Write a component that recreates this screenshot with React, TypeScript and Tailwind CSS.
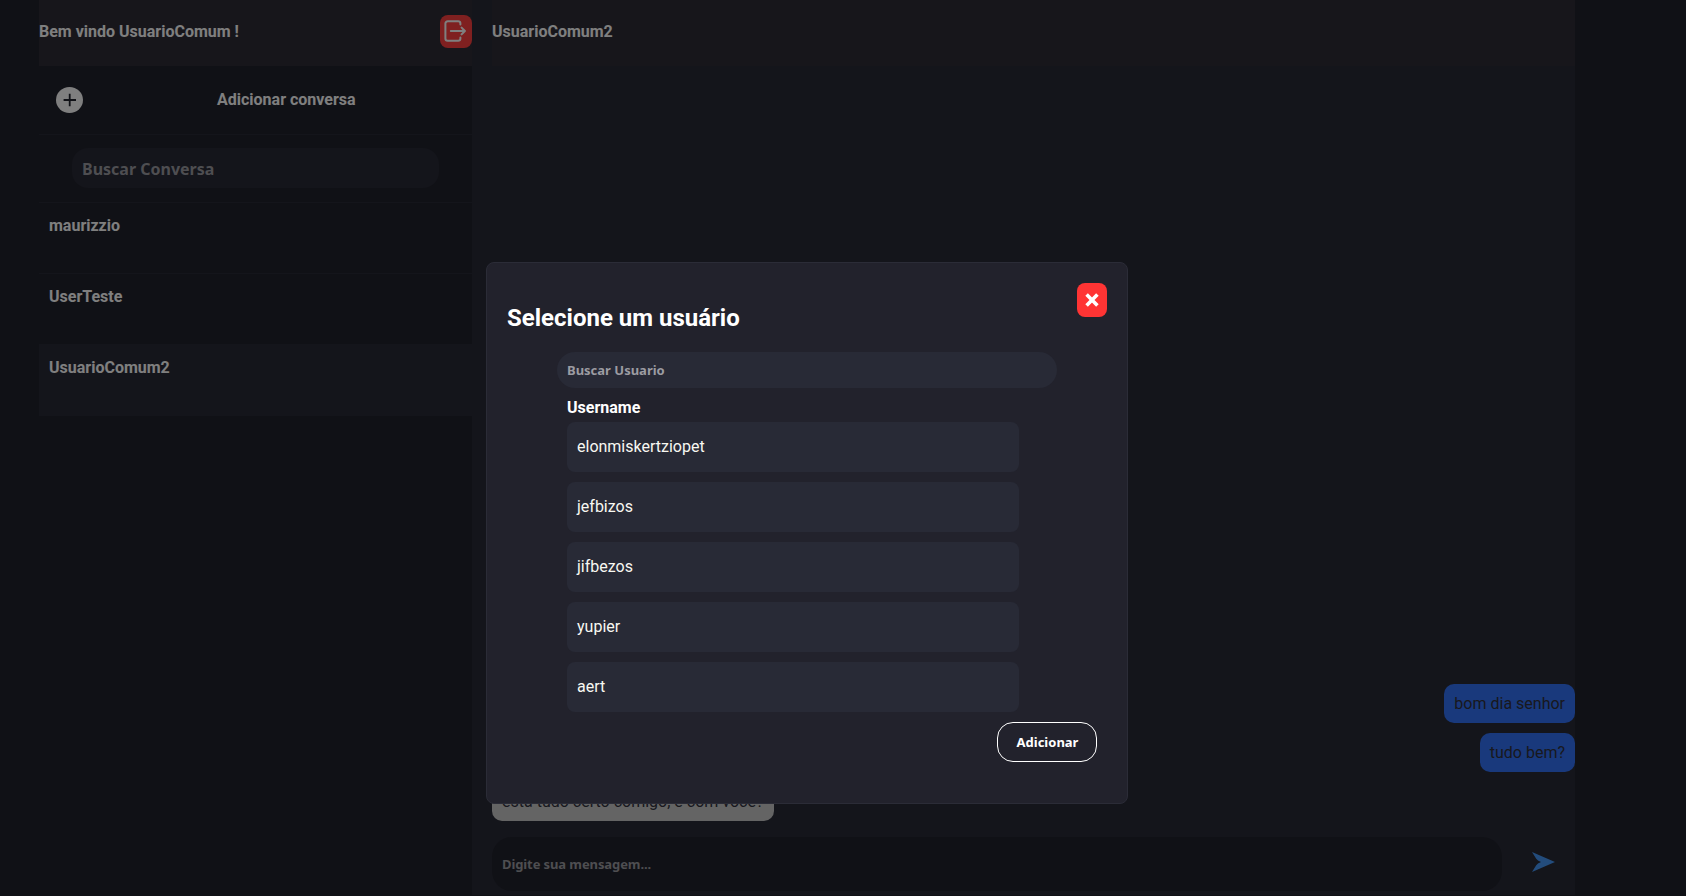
import React from "react";

const conversations = [
  { name: "maurizzio", active: false },
  { name: "UserTeste", active: false },
  { name: "UsuarioComum2", active: true },
];

const users = ["elonmiskertziopet", "jefbizos", "jifbezos", "yupier", "aert"];

function LogoutIcon() {
  return (
    <svg width="22" height="22" viewBox="0 0 22 22" fill="none" stroke="currentColor" strokeWidth="2" strokeLinecap="round" strokeLinejoin="round">
      <path d="M16.4 4.4V3.6a2.3 2.3 0 0 0-2.3-2.3H3.7a2.3 2.3 0 0 0-2.3 2.3v14.8a2.3 2.3 0 0 0 2.3 2.3h10.4a2.3 2.3 0 0 0 2.3-2.3v-.8" />
      <path d="M6.8 11h14M17.6 7.6 20.9 11l-3.3 3.4" />
    </svg>
  );
}

function PlusCircleIcon() {
  return (
    <svg width="27" height="26" viewBox="0 0 27 26">
      <ellipse cx="13.5" cy="13" rx="13.5" ry="13" fill="#fff" />
      <path d="M13.7 6.8v12.4M7.6 13h12.4" stroke="#21222c" strokeWidth="1.8" />
    </svg>
  );
}

function SendIcon() {
  return (
    <svg width="23" height="20" viewBox="0 0 23 20" fill="#4698f8">
      <path d="M0 0 23 10 0 20 4.2 13.2Q5.4 11.4 9 10 5.4 8.6 4.2 6.8Z" />
    </svg>
  );
}

function CloseIcon() {
  return (
    <svg width="14" height="14" viewBox="0 0 14 14" stroke="#fff" strokeWidth="3.6">
      <path d="M1.6 1.6 12.4 12.4M12.4 1.6 1.6 12.4" />
    </svg>
  );
}

function Sidebar() {
  return (
    <aside className="flex w-[433px] shrink-0 flex-col bg-[#21222c] font-bold text-white">
      <header className="h-[66px] bg-[#2e2c36] pt-[15px]">
        <div className="flex h-[33px] items-center justify-between">
          <span>Bem vindo UsuarioComum !</span>
          <button className="flex h-[33px] w-8 items-center justify-center rounded-lg bg-[#ff4040] pr-0.5 pb-px">
            <LogoutIcon />
          </button>
        </div>
      </header>
      <div className="flex h-[69px] items-center border-b border-[#282a36] pb-px pl-[17px]">
        <PlusCircleIcon />
        <span className="ml-[134px]">Adicionar conversa</span>
      </div>
      <div className="h-[68px] border-b border-[#282a36] pt-[13px] pl-[33px]">
        <input
          placeholder="Buscar Conversa"
          className="block h-10 w-[367px] rounded-2xl bg-[#282a36] px-2.5 pt-px font-['Noto_Sans',sans-serif] text-base font-bold outline-none placeholder:text-[#9c9ca2]"
        />
      </div>
      {conversations.map((c) => (
        <div
          key={c.name}
          className={
            "h-[71px] border-b border-[#282a36] px-2.5 pt-[13px] " + (c.active ? "bg-[#282a36]" : "")
          }
        >
          {c.name}
        </div>
      ))}
    </aside>
  );
}

function Chat() {
  return (
    <main className="flex flex-1 flex-col bg-[#282a36] pl-5">
      <header className="h-[66px] bg-[#2e2c36] pt-[22px] font-bold text-white">UsuarioComum2</header>
      <div className="flex flex-1 flex-col justify-end gap-2.5 pb-4 text-[#30313c]">
        <p className="self-end rounded-[10px] bg-[#3272f8] p-2.5">bom dia senhor</p>
        <p className="self-end rounded-[10px] bg-[#3272f8] p-2.5">tudo bem?</p>
        <p className="w-[282px] self-start rounded-[10px] bg-[#c8c8c8] p-2.5 whitespace-nowrap">
          está tudo certo comigo, e com você?
        </p>
      </div>
      <div className="mb-1 flex h-[54px] items-center">
        <input
          placeholder="Digite sua mensagem..."
          className="h-[54px] w-[1010px] rounded-[20px] bg-[#21222c] px-2.5 font-['Noto_Sans',sans-serif] text-[13px] font-bold tracking-[-0.1px] outline-none placeholder:text-[#9c9ca2]"
        />
        <button className="-mt-[4px] ml-[30px]">
          <SendIcon />
        </button>
      </div>
    </main>
  );
}

function UserDialog() {
  return (
    <div className="fixed inset-0 bg-black/50">
      <section className="mt-[262px] ml-[486px] h-[542px] w-[642px] rounded-lg border border-[#2b2c37] bg-[#22222c] p-5 text-white">
        <div className="flex h-[69px] items-start justify-between">
          <h2 className="mt-[21px] text-2xl leading-7 font-bold">Selecione um usuário</h2>
          <button className="flex h-[34px] w-[30px] items-center justify-center rounded-lg bg-[#ff3434]">
            <CloseIcon />
          </button>
        </div>
        <div className="ml-[50px] w-[500px]">
          <input
            placeholder="Buscar Usuario"
            className="block h-9 w-full rounded-full bg-[#282a36] px-2.5 font-['Noto_Sans',sans-serif] text-[13px] font-bold outline-none placeholder:text-[#9c9ca2]"
          />
          <div className="mt-2.5 ml-2.5 w-[452px]">
            <h3 className="font-bold">Username</h3>
            <ul className="mt-[5px] flex flex-col gap-2.5 text-[#f8f8f2]">
              {users.map((u) => (
                <li key={u} className="h-[50px] rounded-lg bg-[#282a36] px-2.5 pt-[15px]">
                  {u}
                </li>
              ))}
            </ul>
          </div>
        </div>
        <button className="mt-2.5 ml-[490px] block h-10 w-[100px] rounded-2xl border border-white pl-px font-['Noto_Sans',sans-serif] text-[13px] font-bold">
          Adicionar
        </button>
      </section>
    </div>
  );
}

export default function App() {
  return (
    <div className="h-[896px] overflow-hidden bg-[#21222c] font-[Roboto,sans-serif] text-base leading-[19px]">
      <div className="ml-[39px] flex h-[895px] w-[1536px]">
        <Sidebar />
        <Chat />
      </div>
      <UserDialog />
    </div>
  );
}
